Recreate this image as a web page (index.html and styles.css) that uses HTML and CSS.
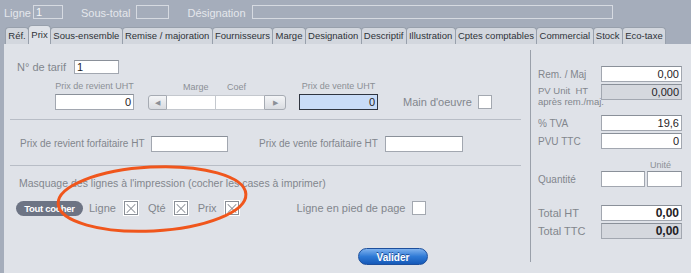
FILE: index.html
```html
<!DOCTYPE html>
<html lang="fr">
<head>
  <meta charset="UTF-8" />
  <title>Ligne - Prix</title>
  <link rel="stylesheet" href="styles.css">
</head>
<body>

  <!-- Barre du haut -->
  <div id="topbar">
    <div class="headrow">
      <span class="hlabel">Ligne</span>
      <div class="hfield f-ligne">1</div>
      <span class="hlabel l-sous">Sous-total</span>
      <div class="hfield f-sous"></div>
      <span class="hlabel l-desig">Désignation</span>
      <div class="hfield f-desig"></div>
    </div>

    <div class="tabs">
      <div class="tab">Réf.</div>
      <div class="tab active">Prix</div>
      <div class="tab">Sous-ensemble</div>
      <div class="tab">Remise / majoration</div>
      <div class="tab">Fournisseurs</div>
      <div class="tab">Marge</div>
      <div class="tab">Designation</div>
      <div class="tab">Descriptif</div>
      <div class="tab">Illustration</div>
      <div class="tab">Cptes comptables</div>
      <div class="tab">Commercial</div>
      <div class="tab">Stock</div>
      <div class="tab">Eco-taxe</div>
    </div>
  </div>

  <div id="main">
    <div class="left">

      <!-- Prix unitaires -->
      <div class="section s-prix">
        <div class="tarif">
          <span class="tarif-label">N° de tarif</span>
          <div class="field f-tarif">1</div>
        </div>

        <div class="pricerow">
          <div class="col c-revient">
            <div class="small">Prix de revient UHT</div>
            <div class="field num w78">0</div>
          </div>

          <div class="col c-slider">
            <div class="small slabels">
              <span class="l-marge">Marge</span>
              <span class="l-coef">Coef</span>
            </div>
            <div class="slider">
              <div class="sbtn">&#9664;</div>
              <div class="sval"></div>
              <div class="sval last"></div>
              <div class="sbtn">&#9654;</div>
            </div>
          </div>

          <div class="col c-vente">
            <div class="small">Prix de vente UHT</div>
            <div class="field num w78 focus">0</div>
          </div>

          <div class="mo">
            <span>Main d'oeuvre</span>
            <div class="check"></div>
          </div>
        </div>
      </div>

      <!-- Forfaits -->
      <div class="section s-forfait">
        <span class="flabel fl1">Prix de revient forfaitaire HT</span>
        <div class="field w76"></div>
        <span class="flabel fl2">Prix de vente forfaitaire HT</span>
        <div class="field w77"></div>
      </div>

      <!-- Masquage -->
      <div class="section s-masque">
        <div class="mtitle">Masquage des lignes à l'impression (cocher les cases à imprimer)</div>
        <div class="mrow">
          <div class="pill">Tout cocher</div>
          <span class="clabel">Ligne</span>
          <div class="check x"></div>
          <span class="clabel">Qté</span>
          <div class="check x"></div>
          <span class="clabel">Prix</span>
          <div class="check x"></div>
          <span class="clabel pied">Ligne en pied de page</span>
          <div class="check"></div>
        </div>
        <div class="valider">Valider</div>

        <svg class="circle" width="220" height="80" viewBox="0 0 220 80">
          <ellipse cx="110" cy="40" rx="94" ry="32" transform="rotate(-3 110 40)" fill="none" stroke="#f0561c" stroke-width="3"/>
        </svg>
      </div>
    </div>

    <!-- Totaux -->
    <div class="right">
      <div class="rrow r-rem">
        <span class="rlabel">Rem. / Maj</span>
        <div class="field num w80">0,00</div>
      </div>
      <div class="rrow r-pv">
        <span class="rlabel two">PV Unit&nbsp; HT<br>après rem./maj.</span>
        <div class="field num w80 ro">0,000</div>
      </div>
      <div class="rrow r-tva">
        <span class="rlabel">% TVA</span>
        <div class="field num w80">19,6</div>
      </div>
      <div class="rrow r-ttc">
        <span class="rlabel">PVU TTC</span>
        <div class="field num w80">0</div>
      </div>
      <div class="small unite">Unité</div>
      <div class="rrow r-qte">
        <span class="rlabel">Quantité</span>
        <div class="field w44"></div>
        <div class="field w34"></div>
      </div>
      <div class="rrow r-tht">
        <span class="rlabel big">Total HT</span>
        <div class="field num w80 bold">0,00</div>
      </div>
      <div class="rrow r-tttc">
        <span class="rlabel big">Total TTC</span>
        <div class="field num w80 bold ro">0,00</div>
      </div>
    </div>
  </div>

</body>
</html>
```

FILE: styles.css
```css
body {
  margin: 0;
  width: 691px;
  height: 273px;
  overflow: hidden;
  font-family: "Liberation Sans", Arial, sans-serif;
  font-size: 10px;
  color: #82868d;
  background: #dfe2e8;
}

#topbar {
  background: #a5adbb;
  height: 44px;
}

.headrow {
  height: 26px;
  display: flex;
  align-items: flex-start;
  padding-left: 4px;
}

.hlabel {
  color: #e4e7ec;
  font-size: 11px;
  line-height: 14px;
  margin-top: 6px;
}

.hfield {
  height: 12px;
  margin-top: 5px;
  border: 1px solid #d6dae1;
  color: #f4f6f8;
  font-size: 11px;
  line-height: 12px;
  padding-left: 2px;
  box-sizing: content-box;
}

.f-ligne { margin-left: 2px; width: 26px; }
.l-sous { margin-left: 18px; }
.f-sous { margin-left: 6px; width: 31px; padding-left: 0; }
.l-desig { margin-left: 18px; }
.f-desig { margin-left: 6px; width: 359px; padding-left: 0; }

.tabs {
  display: flex;
  padding-left: 5px;
  height: 18px;
  align-items: flex-end;
}

.tab {
  height: 16px;
  line-height: 16px;
  padding: 0 2.3px;
  font-size: 9.5px;
  color: #2e3238;
  background: #d3d7de;
  border: 1px solid #98a0ac;
  border-bottom: none;
  border-radius: 4px 4px 0 0;
  margin-right: -1px;
}

.tab.active {
  height: 18px;
  line-height: 18px;
  background: #dfe2e8;
  position: relative;
  z-index: 1;
}

#main {
  display: flex;
  height: 229px;
  border-left: 4px solid #a5adbb;
}

.left {
  width: 526px;
}

.section {
  margin-left: 6px;
  width: 511px;
  border-bottom: 1px solid #b8bdc6;
}

.s-prix {
  padding-top: 16px;
  box-sizing: border-box;
  height: 76px;
}

.tarif {
  display: flex;
  align-items: center;
  height: 14px;
  padding-left: 7px;
}

.tarif-label {
  font-size: 11px;
  width: 57px;
}

.field {
  height: 14px;
  border: 1px solid #a2a7b0;
  border-top-color: #8a9099;
  background: #ffffff;
  color: #1f2226;
  font-size: 11px;
  line-height: 14px;
  box-sizing: content-box;
}

.f-tarif {
  width: 41px;
  padding-left: 2px;
  height: 12px;
  line-height: 12px;
}

.num {
  text-align: right;
  padding-right: 2px;
}

.w76 { width: 75px; }
.w77 { width: 76px; }
.w78 { width: 75px; }
.w80 { width: 77px; }
.w44 { width: 42px; }
.w34 { width: 33px; margin-left: 2px; }

.pricerow {
  display: flex;
  align-items: flex-end;
  margin-top: 6px;
  padding-left: 45px;
}

.col {
  display: flex;
  flex-direction: column;
  align-items: center;
}

.small {
  font-size: 9px;
  line-height: 12px;
  height: 12px;
  margin-bottom: 2px;
  color: #8c9096;
}

.c-slider {
  margin-left: 14px;
  align-items: stretch;
}

.l-marge { margin-left: 35px; }
.l-coef { margin-left: 16px; }

.slider {
  display: flex;
  width: 139px;
  height: 15px;
}

.sbtn {
  width: 19px;
  border: 1px solid #a6abb3;
  background: linear-gradient(#f4f5f7, #d9dce1);
  color: #8b9097;
  font-size: 7px;
  line-height: 13px;
  text-align: center;
  box-sizing: border-box;
}

.sbtn:first-child { border-radius: 3px 0 0 3px; }
.sbtn:last-child { border-radius: 0 3px 3px 0; width: 22px; }

.sval {
  width: 49px;
  background: #ffffff;
  border-top: 1px solid #c4c8ce;
  border-bottom: 1px solid #c4c8ce;
  border-right: 1px solid #c4c8ce;
  box-sizing: border-box;
}

.sval.last { width: 48px; border-right: none; }

.c-vente {
  margin-left: 12px;
}

.focus {
  background: #c9dcf7;
  border: 1px solid #2f3540;
}

.mo {
  display: flex;
  align-items: center;
  margin-left: 25px;
  height: 16px;
  font-size: 11px;
}

.check {
  width: 12px;
  height: 12px;
  background: #ffffff;
  border: 1px solid #a3a8b0;
  margin-left: 6px;
  position: relative;
}

.check.x::before,
.check.x::after {
  content: "";
  position: absolute;
  left: 0;
  top: 5.5px;
  width: 12px;
  height: 1px;
  background: #8a8f97;
  transform: rotate(45deg);
}

.check.x::after {
  transform: rotate(-45deg);
}

.check.x {
  border-color: #8a8f97;
  margin-left: 8px;
  box-shadow: 0 0 0 1px #ffffff;
}

.s-forfait {
  display: flex;
  align-items: center;
  height: 46px;
  padding-top: 2px;
  padding-left: 10px;
  box-sizing: border-box;
}

.fl1 { width: 131px; }
.fl2 { width: 126px; margin-left: 31px; }

.s-masque {
  border-bottom: none;
  position: relative;
  height: 106px;
  padding-top: 11px;
  box-sizing: border-box;
}

.mtitle {
  font-size: 10.5px;
  line-height: 13px;
  padding-left: 9px;
}

.mrow {
  display: flex;
  align-items: center;
  margin-top: 10px;
  height: 16px;
  padding-left: 6px;
}

.pill {
  width: 67px;
  height: 15px;
  line-height: 15px;
  border-radius: 8px;
  background: #6d7484;
  color: #ffffff;
  font-weight: bold;
  font-size: 9.5px;
  letter-spacing: -0.3px;
  text-align: center;
  white-space: nowrap;
}

.clabel {
  font-size: 11px;
  margin-left: 6px;
}

.clabel + .check.x + .clabel {
  margin-left: 10px;
}

.pied {
  margin-left: 58px !important;
}

.valider {
  width: 70px;
  height: 17px;
  line-height: 17px;
  margin-top: 32px;
  margin-left: 348px;
  border-radius: 9px;
  background: linear-gradient(#7fb2ee 0%, #2f7ad6 50%, #1559b8 100%);
  border: 1px solid #1d4f9c;
  box-sizing: border-box;
  color: #ffffff;
  font-weight: bold;
  font-size: 10px;
  text-align: center;
  text-shadow: 0 -1px 0 #1b4a94;
}

.circle {
  position: absolute;
  left: 32px;
  top: -7px;
}

.right {
  flex: 1;
  margin-top: 6px;
  height: 212px;
  border-left: 1px solid #9aa0aa;
  padding-left: 7px;
}

.rrow {
  display: flex;
  align-items: center;
}

.rlabel {
  width: 63px;
  font-size: 10px;
  white-space: nowrap;
}

.rlabel.two {
  font-size: 9.5px;
  line-height: 11px;
  align-self: flex-start;
  margin-top: 1px;
}

.rlabel.big {
  font-size: 11px;
}

.r-rem { margin-top: 16px; }
.r-pv { margin-top: 2px; align-items: flex-start; height: 24px; }
.r-tva { margin-top: 7px; }
.r-ttc { margin-top: 2px; }
.r-qte { margin-top: 0; }
.r-tht { margin-top: 18px; }
.r-tttc { margin-top: 2px; }

.ro {
  background: #d5d8de;
}

.bold {
  font-weight: bold;
  font-size: 12px;
}

.unite {
  margin: 10px 0 0 112px;
  height: 12px;
}
```
